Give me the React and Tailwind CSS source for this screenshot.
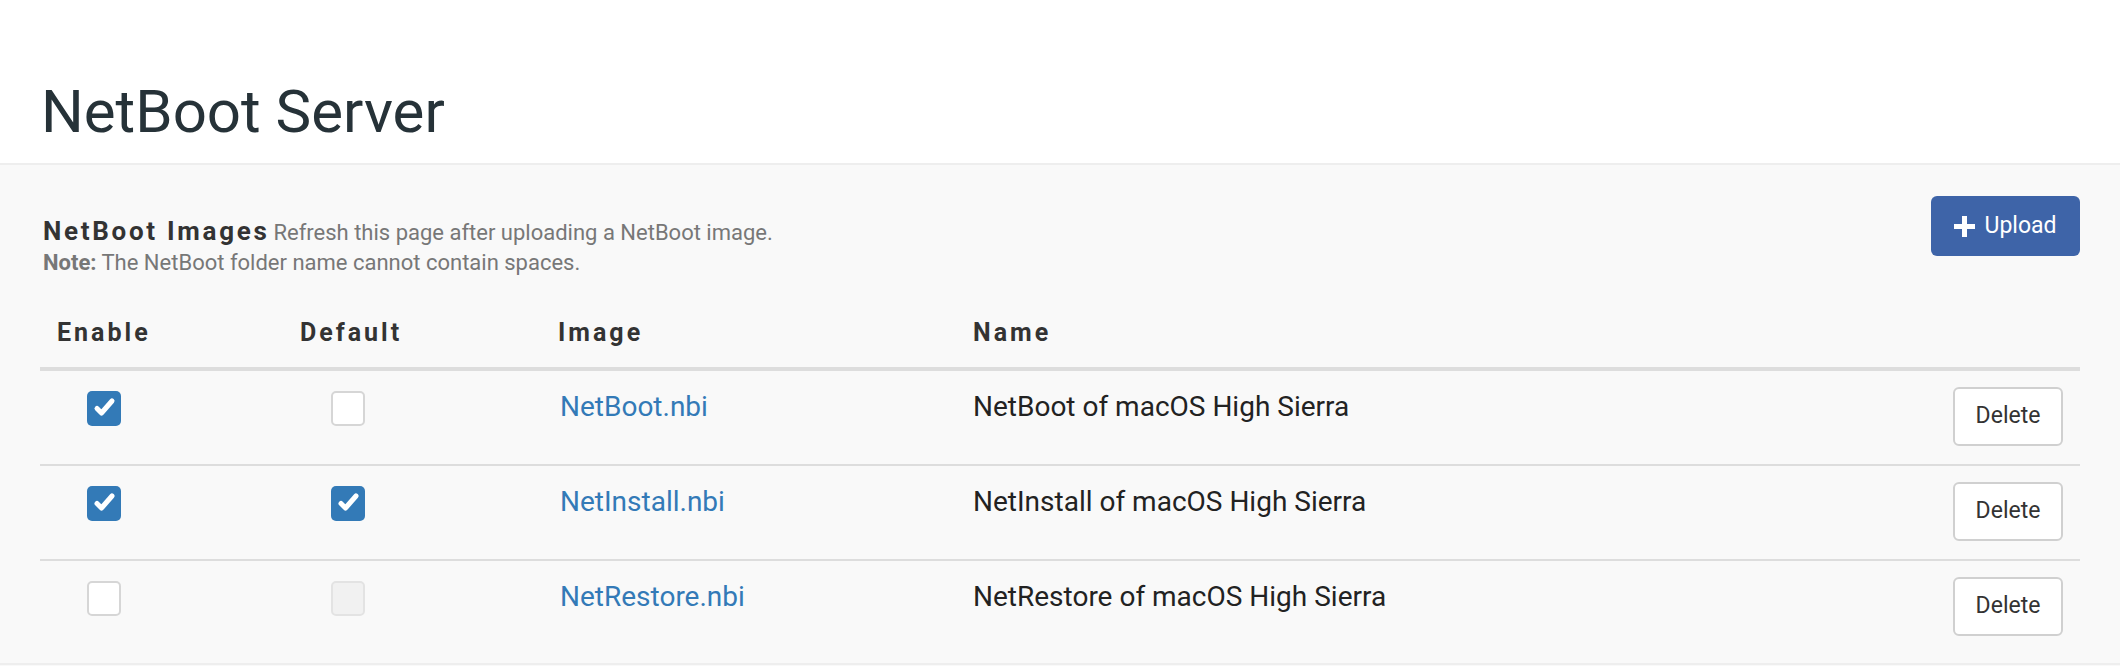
import React from "react";

const ROWS = [
  { enable: true, def: "off", image: "NetBoot.nbi", name: "NetBoot of macOS High Sierra" },
  { enable: true, def: "on", image: "NetInstall.nbi", name: "NetInstall of macOS High Sierra" },
  { enable: false, def: "disabled", image: "NetRestore.nbi", name: "NetRestore of macOS High Sierra" },
];

function Checkbox({ state }) {
  if (state === "on") {
    return (
      <span className="block w-[34px] h-[35px] rounded-[5px] bg-[#337ab7]">
        <svg width="34" height="35" viewBox="0 0 34 35">
          <path d="M10 17.5 L14.5 22 L25 10" fill="none" stroke="white" strokeWidth="5" strokeLinecap="round" strokeLinejoin="round" />
        </svg>
      </span>
    );
  }
  if (state === "disabled") {
    return <span className="block w-[34px] h-[35px] rounded-[5px] bg-[#f1f1f1] border-2 border-[#e3e3e3]" />;
  }
  return <span className="block w-[34px] h-[35px] rounded-[5px] bg-white border-2 border-[#d6d6d6]" />;
}

export default function App() {
  return (
    <div className="w-[2120px] h-[666px] bg-[#f9f9f9] font-['Roboto',sans-serif] overflow-hidden">
      <div className="bg-white h-[165px] border-b-2 border-[#eeeeee] pl-[41px] pt-[82px]">
        <h1 className="text-[60px] leading-none text-[#263238]">NetBoot Server</h1>
      </div>

      <div className="pl-[40px] pr-[40px] border-b-2 border-[#eeeeee] h-[500px]">
        <div className="flex justify-between items-start pt-[31px]">
          <div className="pt-[21px] pl-[3px]">
            <div className="leading-[29px] text-[#333]">
              <span className="text-[26px] font-bold tracking-[2.7px]">NetBoot Images</span>{" "}
              <span className="text-[22px] text-[#777]">Refresh this page after uploading a NetBoot image.</span>
            </div>
            <div className="text-[22px] leading-[27px] text-[#777]">
              <span className="font-bold">Note:</span> The NetBoot folder name cannot contain spaces.
            </div>
          </div>
          <button className="h-[60px] w-[149px] rounded-[6px] bg-[#3e64a8] text-white flex items-center justify-center gap-[9px]">
            <svg width="21" height="21" viewBox="0 0 21 21">
              <path d="M8 0h5v8h8v5h-8v8h-5v-8h-8v-5h8z" fill="white" />
            </svg>
            <span className="text-[23px]">Upload</span>
          </button>
        </div>

        <div className="mt-[33px]">
          <div className="flex items-end h-[62px] pb-[16px] border-b-4 border-[#dddddd] text-[25px] font-bold tracking-[3px] text-[#333]">
            <div className="w-[243px] pl-[17px]">Enable</div>
            <div className="w-[258px] pl-[17px]">Default</div>
            <div className="w-[415px] pl-[17px]">Image</div>
            <div className="flex-1 pl-[17px]">Name</div>
          </div>

          {ROWS.map((row, i) => (
            <div
              key={row.image}
              className={
                "flex items-start h-[95px] text-[28px] " +
                (i < ROWS.length - 1 ? "border-b-2 border-[#dddddd]" : "")
              }
            >
              <div className="w-[243px] pl-[47px] pt-[20px]">
                <Checkbox state={row.enable ? "on" : "off"} />
              </div>
              <div className="w-[258px] pl-[48px] pt-[20px]">
                <Checkbox state={row.def} />
              </div>
              <div className="w-[415px] pl-[19px] pt-[19px] leading-[34px] text-[#337ab7]">{row.image}</div>
              <div className="flex-1 pl-[17px] pt-[19px] leading-[34px] text-[#222]">{row.name}</div>
              <div className="pr-[17px] pt-[16px]">
                <button className="h-[59px] w-[110px] rounded-[6px] bg-white border-2 border-[#d0d0d0] text-[23px] text-[#333]">
                  Delete
                </button>
              </div>
            </div>
          ))}
        </div>
      </div>
    </div>
  );
}
